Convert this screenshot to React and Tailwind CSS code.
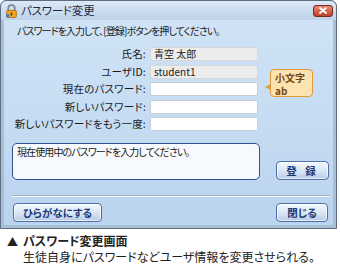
export default function App() {
  const rows = [
    { label: "氏名:", value: "青空 太郎", ro: true },
    { label: "ユーザID:", value: "student1", ro: true },
    { label: "現在のパスワード:", value: "" },
    { label: "新しいパスワード:", value: "" },
    { label: "新しいパスワードをもう一度:", value: "" },
  ];

  const btn =
    "h-[19px] rounded-[4px] border border-[#4d6ea6] bg-gradient-to-b from-[#f4f8fd] via-[#dbe7f5] to-[#b6cbe6] text-[10.5px] font-bold text-[#1d3a78] flex items-center justify-center shadow-[inset_0_0_0_1px_rgba(255,255,255,0.7)]";

  return (
    <div className="w-[340px] h-[266px] bg-white overflow-hidden font-['Noto_Sans_CJK_JP','Noto_Sans',sans-serif] [font-feature-settings:'palt']">
      {/* window */}
      <div className="w-[337px] h-[229px] border border-[#5e6d80] rounded-t-[6px] bg-[#a9bfd6] flex flex-col">
        <div className="h-[19px] flex items-center pl-[4px] pr-[3px] rounded-t-[6px] bg-gradient-to-b from-[#dce8f5] to-[#bed3ea]">
          <svg width="13" height="14" viewBox="0 0 12 13">
            <path d="M3 6V4a3 3 0 0 1 6 0v2" fill="none" stroke="#7a8698" strokeWidth="1.6" />
            <rect x="1.5" y="6" width="9" height="6.5" rx="1" fill="#f0a820" stroke="#b06a10" strokeWidth="0.8" />
            <rect x="5.2" y="8" width="1.6" height="2.6" fill="#5a3a10" />
            <circle cx="2.5" cy="11" r="1.6" fill="#3a78c8" />
          </svg>
          <span className="ml-[3px] text-[11.5px] text-[#1c2b44] tracking-[-0.2px]">パスワード変更</span>
          <div className="ml-auto w-[20px] h-[12px] rounded-[3px] border border-[#7a2a1e] bg-gradient-to-b from-[#e88a74] to-[#c0402c] flex items-center justify-center">
            <svg width="8" height="7" viewBox="0 0 8 7">
              <path d="M1 1l6 5M7 1L1 6" stroke="white" strokeWidth="1.8" strokeLinecap="round" />
            </svg>
          </div>
        </div>

        <div className="relative mx-[3px] mb-[3px] flex-1 bg-gradient-to-b from-[#d0e3f6] via-[#c5dcf2] to-[#bad3ee] text-[10px] text-[#1a1a1a]">
          <div className="pl-[13px] pt-[4px] h-[27px] leading-[14px] tracking-[-0.9px]">
            パスワードを入力して、[登録]ボタンを押してください。
          </div>

          <div className="flex flex-col gap-[3.5px]">
            {rows.map((r) => (
              <div key={r.label} className="flex items-center h-[14px]">
                <div className="w-[143px] text-right pr-[1px] leading-[14px] text-[10.5px] tracking-[0.2px]">{r.label}</div>
                <div
                  className={
                    "ml-[3px] w-[108px] h-[14px] rounded-[2px] border px-[3px] leading-[12px] " +
                    (r.ro ? "bg-[#ececec] border-[#d4d8dc]" : "bg-white border-[#c6cfd8]")
                  }
                >
                  {r.value}
                </div>
              </div>
            ))}
          </div>

          {/* tooltip */}
          <div className="absolute left-[266px] top-[49px] w-[43px] h-[28px] rounded-[4px] border border-[#e39a3c] bg-[#fde3b0] px-[4px] pt-[1px] text-[10px] font-bold leading-[13px] text-[#7a4a14]">
            <p>
              小文字
              <br />
              ab
            </p>
            <div className="absolute -left-[6px] top-[14px] w-0 h-0 border-y-[3px] border-y-transparent border-r-[6px] border-r-[#e39a3c]" />
          </div>

          <div className="flex items-end mt-[12px] pl-[8px]">
            <div className="w-[248px] h-[37px] rounded-[5px] border-[1.5px] border-[#30508e] bg-[#f6f9fe] px-[4px] pt-[1px] leading-[14px] tracking-[-0.9px]">
              現在使用中のパスワードを入力してください。
            </div>
            <div className={btn + " ml-[16px] w-[53px] tracking-[3px]"}>登 録</div>
          </div>

          <div className="mt-[15px] ml-[8px] mr-[3px] h-[2px] border-t border-[#9fb3c8] border-b-white border-b" />

          <div className="flex mt-[6px] pl-[9px]">
            <div className={btn + " w-[89px]"}>ひらがなにする</div>
            <div className={btn + " ml-auto mr-[5px] w-[52px]"}>閉じる</div>
          </div>
        </div>
      </div>

      {/* caption */}
      <div className="pl-[7px] pt-[4px] text-[12px] text-[#222] leading-[16px]">
        <div className="flex items-center">
          <span className="w-[16px] text-[11px]">▲</span>
          <span className="font-bold">パスワード変更画面</span>
        </div>
        <div className="pl-[16px]">生徒自身にパスワードなどユーザ情報を変更させられる。</div>
      </div>
    </div>
  );
}
